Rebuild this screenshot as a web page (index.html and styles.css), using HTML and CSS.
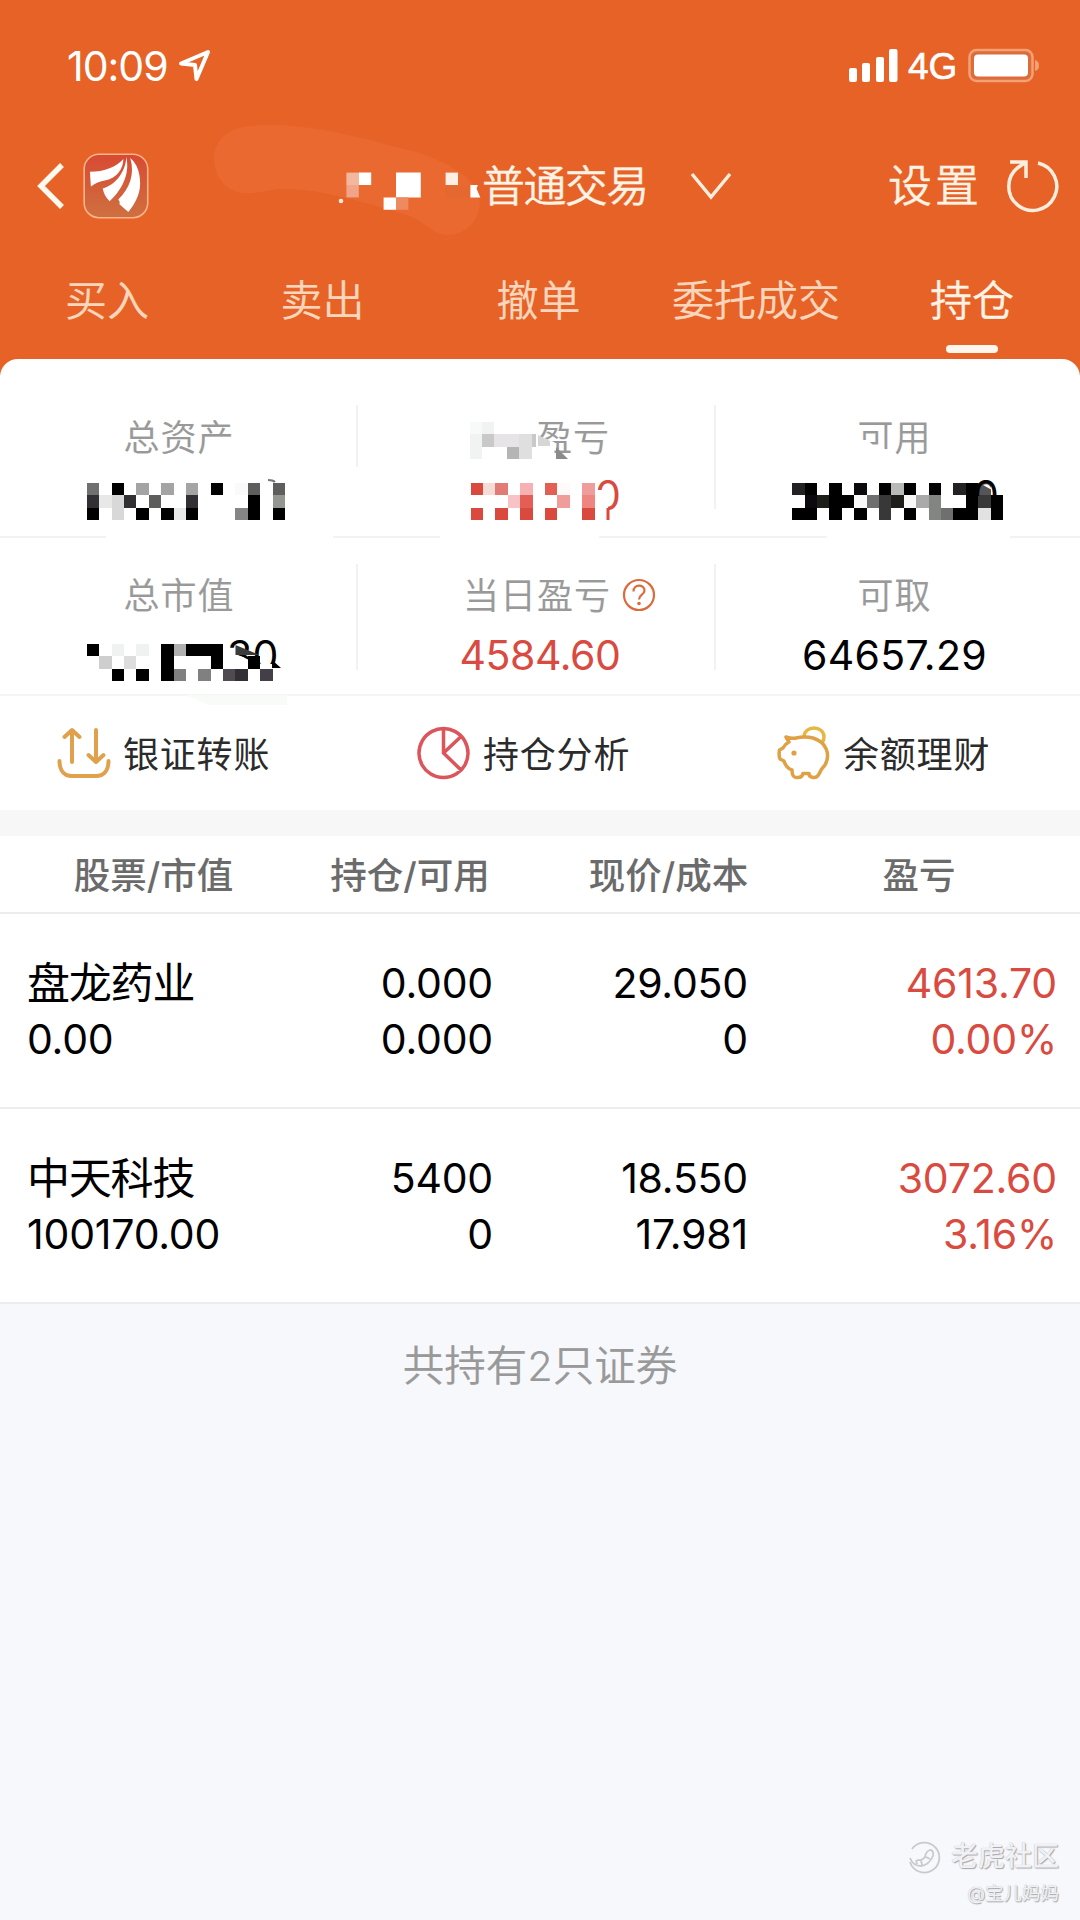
FILE: index.html
```html
<!DOCTYPE html>
<html lang="zh-CN">
<head>
    <meta charset="UTF-8">
    <title>持仓</title>
    <link rel="stylesheet" href="styles.css">
</head>
<body>
<div class="page">
    <header class="header">
        <svg class="smear" width="290" height="130" viewBox="200 115 290 130">
            <path fill="#e96930" d="M214 160C214 138 230 128 250 126C300 121 360 137 400 148C440 157 478 176 480 202C479 224 463 235 448 235C435 235 425 223 410 216C370 204 320 188 282 189C268 190 256 194 243 193C226 191 215 178 214 160Z"/>
        </svg>
        <!--状态栏-->
        <div class="status">
            <span class="time">10:09</span>
            <svg class="location" width="34" height="34" viewBox="0 0 34 34">
                <path d="M3 14.5L30 3L18.500 30L17 16Z"/>
            </svg>
            <div class="status-right">
                <svg width="50" height="36" viewBox="0 0 50 36" fill="#fff">
                    <rect x="1" y="20" width="8" height="14" rx="2"/>
                    <rect x="14" y="15" width="8" height="19" rx="2"/>
                    <rect x="28" y="9" width="8" height="25" rx="2"/>
                    <rect x="41" y="1" width="8.500" height="33" rx="2"/>
                </svg>
                <span class="net">4G</span>
                <svg width="72" height="36" viewBox="0 0 72 36">
                    <rect x="1.500" y="2" width="63" height="31" rx="7" fill="#dc6c3c" stroke="#f3a172" stroke-width="2.500"/>
                    <rect x="6" y="6.500" width="54" height="22" rx="4" fill="#fff"/>
                    <path d="M67 12q4 1 4 5.500t-4 5.500z" fill="#f3a172"/>
                </svg>
            </div>
        </div>
        <!--导航栏-->
        <div class="nav">
            <svg class="back" width="30" height="50" viewBox="0 0 30 50">
                <path d="M26 4L5 25L26 46"/>
            </svg>
            <svg class="logo" width="66" height="66" viewBox="0 0 67 67">
                <defs>
                    <linearGradient id="logoBg" x1="0" y1="0" x2="0" y2="1">
                        <stop offset="0" stop-color="#d84a33"/>
                        <stop offset="1" stop-color="#cf7040"/>
                    </linearGradient>
                </defs>
                <rect x="1.200" y="1.200" width="64.500" height="64.500" rx="15" fill="url(#logoBg)" stroke="#fbb48b" stroke-width="1.600"/>
                <g fill="#fff">
                    <path d="M7 19C22 19 34 14 41 6C41 16 34 26 22 28C16 29 12 31 8 34Z"/>
                    <path d="M44 4C47 18 43 34 27 49C23 45 21 41 20 36C33 32 43 20 44 4Z"/>
                    <path d="M48 5C55 11 58 20 58 31C58 42 53 51 46 60L37 52C38 48 36 49 36 47C47 36 53 22 48 5Z"/>
                </g>
            </svg>
            <div class="title">
                <svg width="146" height="60" viewBox="336 156 146 60">
                    <circle cx="341" cy="201" r="2.300" fill="#ffe9dc"/>
                    <g transform="translate(346.4 172.600) scale(12.400)">
                        <path fill="#f3b7a0" d="M0 0h1v1h-1z"/>
                        <path fill="#f0a488" d="M0 1h1v1h-1z"/>
                        <path fill="#fff" d="M1 0h1v1h-1zM4 0h2v2h-2zM3 2h1v1h-1z"/>
                        <path fill="#ee8a5f" d="M4 2h1v1h-1z"/>
                        <path fill="#fdeee6" d="M8 0h1v1h-1z"/>
                        <path fill="#e4682f" d="M8 1h2v1h-2z"/>
                        <path fill="#fff" d="M10 1h.6l-.1.300l.3.700h-.8z"/>
                    </g>
                </svg>
                <span class="title-text">普通交易</span>
                <svg class="chevron" width="44" height="32" viewBox="0 0 44 32">
                    <path d="M3 4L22 27L41 4"/>
                </svg>
            </div>
            <span class="setting">设置</span>
            <svg class="refresh" width="56" height="56" viewBox="0 0 56 56">
                <path d="M33 5A24 24 0 1 1 13 9.500L21 4M5 4H21V20"/>
            </svg>
        </div>
        <nav class="tabs">
            <a class="tab">买入</a>
            <a class="tab">卖出</a>
            <a class="tab">撤单</a>
            <a class="tab">委托成交</a>
            <a class="tab active">持仓</a>
        </nav>
    </header>

    <main class="card">
        <!--资产-->
        <section class="assets">
            <div class="cell short">
                <span class="label">总资产</span>
                <svg class="value" width="358" height="60" viewBox="0 467 358 60">
                    <path d="M268 480q5 0 7 2" fill="none" stroke="#777" stroke-width="2"/>
                    <g transform="translate(86.700 483) scale(12.400)" shape-rendering="crispEdges">
                        <path fill="#707070" d="M0 0h1v1h-1z"/>
                        <path fill="#000" d="M2 0h1v1h-1zM10 0h1v1h-1zM13 1h1v2h-1zM0 2h1v1h-1zM4 2h1v1h-1zM6 2h1v1h-1zM8 2h1v1h-1zM15 2h1v1h-1z"/>
                        <path fill="#a4a4a4" d="M4 0h1v1h-1zM6 0h1v1h-1zM8 0h1v1h-1z"/>
                        <path fill="#fafafa" d="M12 0h1v1h-1z"/>
                        <path fill="#5e5f5d" d="M13 0h1v1h-1zM15 0h1v1h-1zM5 1h1v1h-1z"/>
                        <path fill="#323035" d="M0 1h1v1h-1zM3 1h1v1h-1zM8 1h1v1h-1z"/>
                        <path fill="#e8e8e8" d="M1 1h1v1h-1zM7 2h1v1h-1z"/>
                        <path fill="#d8d8d8" d="M2 1h1v2h-1z"/>
                        <path fill="#949692" d="M15 1h1v1h-1z"/>
                        <path fill="#858585" d="M12 2h1v1h-1z"/>
                    </g>
                </svg>
            </div>
            <div class="cell">
                <span class="label masked">
                    <svg width="72" height="50" viewBox="465 411 72 50">
                        <g transform="translate(470.500 421) scale(12.400)" shape-rendering="crispEdges">
                            <path fill="#f8faf9" d="M0 0h1v1h-1z"/>
                            <path fill="#f0f3f1" d="M1 0h1v1h-1zM0 1h1v2h-1z"/>
                            <path fill="#c9c9c9" d="M1 1h1v1h-1zM5 1h1v1h-1z"/>
                            <path fill="#e6e4e7" d="M2 1h2v1h-2z"/>
                            <path fill="#dfdfdf" d="M4 1h1v2h-1z"/>
                            <path fill="#b5b5b5" d="M3 2h1v1h-1z"/>
                        </g>
                    </svg>
                    <span class="torn">盈</span><span>亏</span>
                    <svg class="shard" width="32" height="26" viewBox="539 434 32 26">
                        <path fill="#d6d6d6" d="M539 434l12 6v5h-12z"/>
                        <path fill="#8b8b8b" d="M557 446l12 12h-12z"/>
                    </svg>
                </span>
                <svg class="value" width="358" height="60" viewBox="358 467 358 60">
                    <defs>
                        <clipPath id="cutRed"><path d="M598 476h26v36h-16v-12h-4v-10h-6z"/></clipPath>
                    </defs>
                    <text class="num red" x="595" y="510" clip-path="url(#cutRed)">0</text>
                    <path d="M608 508v12" stroke="#dd463d" stroke-width="3"/>
                    <g transform="translate(470.500 483) scale(12.400)" shape-rendering="crispEdges">
                        <path fill="#da493e" d="M0 0h1v1h-1zM0 2h1v1h-1zM2 2h1v1h-1zM4 2h1v1h-1zM6 2h1v1h-1zM9 2h1v1h-1z"/>
                        <path fill="#f6dcd6" d="M1 0h1v1h-1z"/>
                        <path fill="#e27a76" d="M2 0h1v1h-1z"/>
                        <path fill="#f8b1b3" d="M4 0h1v1h-1z"/>
                        <path fill="#e35f56" d="M6 0h1v1h-1zM4 1h1v1h-1z"/>
                        <path fill="#fffafa" d="M7 0h1v1h-1z"/>
                        <path fill="#f09c9a" d="M9 0h1v1h-1zM7 1h1v1h-1z"/>
                        <path fill="#f8c2c6" d="M3 1h1v1h-1z"/>
                        <path fill="#ee8580" d="M9 1h1v1h-1z"/>
                    </g>
                </svg>
            </div>
            <div class="cell last">
                <span class="label masked"><span class="chipped">可</span><span>用</span></span>
                <svg class="value" width="357" height="60" viewBox="716 467 357 60">
                    <defs>
                        <clipPath id="cutTop"><path d="M976 474h30v22h-30z"/></clipPath>
                    </defs>
                    <g transform="translate(792.300 483) scale(12.400)" shape-rendering="crispEdges">
                        <path fill="#000" d="M1 0h1v1h-1zM3 0h1v3h-1zM7 0h1v1h-1zM9 0h1v1h-1zM11 0h1v1h-1zM14 0h1v3h-1zM4 1h1v1h-1zM16 1h1v2h-1zM0 2h2v1h-2zM5 2h1v1h-1zM9 2h1v1h-1zM13 2h1v1h-1z"/>
                        <path fill="#232124" d="M0 0h1v1h-1zM13 0h1v1h-1z"/>
                        <path fill="#0b090d" d="M5 0h1v1h-1zM1 1h1v1h-1z"/>
                        <path fill="#b7bab5" d="M8 0h1v1h-1z"/>
                        <path fill="#555" d="M15 0h1v1h-1z"/>
                        <path fill="#1d1e1a" d="M2 1h1v1h-1zM8 1h1v1h-1z"/>
                        <path fill="#f8f8f8" d="M5 1h1v1h-1zM9 1h1v1h-1z"/>
                        <path fill="#6f6f6f" d="M6 1h1v1h-1zM12 2h1v1h-1z"/>
                        <path fill="#383838" d="M7 1h1v2h-1zM15 1h1v1h-1z"/>
                        <path fill="#aaa" d="M10 1h1v1h-1z"/>
                        <path fill="#838582" d="M11 1h1v2h-1z"/>
                        <path fill="#e2e2e2" d="M15 2h1v1h-1z"/>
                    </g>
                    <path fill="#fff" d="M983 485q6-3 9 5z"/>
                    <text class="num" x="973" y="510" clip-path="url(#cutTop)">0</text>
                </svg>
            </div>
            <!--横线有几段被涂掉-->
            <div class="lines">
                <i class="line-a"></i><i class="line-b"></i><i class="line-c"></i><i class="line-d"></i>
            </div>
            <div class="cell low">
                <span class="label">总市值</span>
                <svg class="value" width="358" height="80" viewBox="0 625 358 80">
                    <defs>
                        <clipPath id="cutArc"><path d="M228 634h52v30h-22l-20-9h-10z"/></clipPath>
                    </defs>
                    <path fill="#f9fbf8" d="M185 695h102v10h-78z"/>
                    <text class="num" x="227" y="670" clip-path="url(#cutArc)">30</text>
                    <path fill="#000" d="M272 660l9 8h-9z"/>
                    <path fill="#3b3b3b" d="M235.500 645l24 10h-24z"/>
                    <g transform="translate(86.700 644) scale(12.400)" shape-rendering="crispEdges">
                        <path fill="#000" d="M0 0h1v1h-1zM6 0h1v3h-1zM8 0h3v1h-3zM10 1h1v1h-1zM13 1h1v1h-1zM2 2h1v1h-1zM4 2h1v1h-1z"/>
                        <path fill="#f0f2f1" d="M2 0h1v1h-1zM4 0h1v1h-1z"/>
                        <path fill="#b0b0b0" d="M7 0h1v1h-1z"/>
                        <path fill="#cecece" d="M1 1h1v1h-1z"/>
                        <path fill="#ddd" d="M3 1h1v1h-1z"/>
                        <path fill="#808080" d="M7 2h1v1h-1zM9 2h1v1h-1z"/>
                        <path fill="#4f4b50" d="M11 2h1v1h-1z"/>
                        <path fill="#333035" d="M12 2h1v1h-1z"/>
                        <path fill="#443f46" d="M14 2h1v1h-1z"/>
                    </g>
                </svg>
            </div>
            <div class="cell low">
                <span class="label">当日盈亏
                    <svg class="help" width="34" height="34" viewBox="0 0 34 34">
                        <circle cx="17" cy="17" r="15"/>
                        <path d="M11.500 13.500C11.500 5.500 22.500 6 22.500 12.500C22.500 17 17 16.500 17 21.500"/>
                        <circle class="dot" cx="17" cy="25.500" r="1.800"/>
                    </svg>
                </span>
                <span class="value num red day">4584.60</span>
            </div>
            <div class="cell low last">
                <span class="label">可取</span>
                <span class="value num">64657.29</span>
            </div>
        </section>

        <!--快捷入口-->
        <section class="actions">
            <a class="action">
                <svg width="54" height="56" viewBox="0 0 54 56" fill="none" stroke="#e0a14c" stroke-width="4" stroke-linecap="round" stroke-linejoin="round">
                    <path d="M15 36V4M7.500 11L15 4L22.500 11M39 4V36M31.500 29L39 36L46.500 29M2.500 35C2.500 44 7 50 15 50H39C47 50 51.500 44 51.500 35"/>
                </svg>
                <span>银证转账</span>
            </a>
            <a class="action">
                <svg width="54" height="56" viewBox="0 0 54 56" fill="none" stroke="#dc555a" stroke-width="3.500">
                    <path d="M26.500 2.500A24.500 24.500 0 1 1 26.490 2.500ZM26.500 3V27L44 44M26.500 27L43.500 11"/>
                </svg>
                <span>持仓分析</span>
            </a>
            <a class="action">
                <svg width="54" height="56" viewBox="0 0 54 56" fill="none" stroke-width="3.500" stroke-linejoin="round">
                    <path stroke="#e6b743" d="M27 11C27 -1 47 -1 47 11Q47 14 45 17"/>
                    <path stroke="#e0a045" d="M9 11Q15 13 19 12Q28 10 36 12C49 16 54 28 48 39Q44 43 42 48Q40 52 36 51.500Q32 51 32 47.500H26Q25 52 20 51.500Q15 52 15 44Q9 42 7 35L3 33Q1.500 30 2.500 24L6 22Q8 18 12 16Z"/>
                    <circle cx="17" cy="27" r="2.600" fill="#e0a045"/>
                </svg>
                <span>余额理财</span>
            </a>
        </section>
        <div class="band"></div>

        <!--持仓列表-->
        <section class="holdings">
            <div class="row head">
                <span>股票/市值</span>
                <span>持仓/可用</span>
                <span>现价/成本</span>
                <span>盈亏</span>
            </div>
            <div class="row">
                <div class="col"><span class="name">盘龙药业</span><span>0.00</span></div>
                <div class="col"><span>0.000</span><span>0.000</span></div>
                <div class="col"><span>29.050</span><span>0</span></div>
                <div class="col red"><span>4613.70</span><span>0.00%</span></div>
            </div>
            <div class="row">
                <div class="col"><span class="name">中天科技</span><span>100170.00</span></div>
                <div class="col"><span>5400</span><span>0</span></div>
                <div class="col"><span>18.550</span><span>17.981</span></div>
                <div class="col red"><span>3072.60</span><span>3.16%</span></div>
            </div>
        </section>
    </main>

    <p class="total">共持有2只证券</p>

    <footer class="mark">
        <div class="mark-name">
            <svg width="34" height="34" viewBox="0 0 34 34" fill="none" stroke="#c9cace" stroke-width="1.800">
                <path d="M5 9A15 15 0 1 1 3 22"/>
                <path d="M3 18q3 8 11 8q8-1 12-10q1-6-3-6q-4 1-5 7q-3 4-8 3M9 20l1 4M14 20l1 5M19 17l4 2"/>
            </svg>
            <span>老虎社区</span>
        </div>
        <div class="mark-user">@宝儿妈妈</div>
    </footer>
</div>
</body>
</html>
```
FILE: styles.css
```css
*{
    box-sizing: border-box;
}
body{
    margin: 0;
    background: #f7f8fc;
    font-family: Inter, "Noto Sans CJK SC", sans-serif;
    color: #000;
}
svg{
    display: block;
    flex: none;
}
.page{
    width: 1080px;
    height: 1920px;
    display: flex;
    flex-direction: column;
    overflow: hidden;
}

/*头部*/
.header{
    position: relative;
    height: 375px;
    margin-bottom: -16px;
    background: #e66226;
    color: #fff3e6;
    font-weight: 350;
}
.smear{
    position: absolute;
    left: 200px;
    top: 115px;
}
.status{
    display: flex;
    align-items: center;
    height: 132px;
    padding: 0 40px 0 67px;
}
.time{
    width: 111px;
    font-size: 41px;
    font-weight: 400;
    letter-spacing: -1px;
    color: #fff;
}
.location path{
    fill: none;
    stroke: #fff;
    stroke-width: 4;
    stroke-linejoin: round;
}
.status-right{
    display: flex;
    align-items: center;
    margin-left: auto;
}
.net{
    width: 70px;
    padding: 2px 0 0 10px;
    font: 400 37px "Liberation Sans", sans-serif;
    color: #fff;
    -webkit-text-stroke: .6px #fff;
}
.nav{
    position: relative;
    display: flex;
    align-items: center;
    height: 108px;
    padding-left: 36px;
}
.back{
    margin-right: 17px;
}
.back path{
    fill: none;
    stroke: #fff8ee;
    stroke-width: 5.500;
}
.title{
    display: flex;
    align-items: center;
    width: 552px;
    margin-left: 187px;
}
.title-text{
    padding-bottom: 7px;
    font-size: 43px;
    letter-spacing: -1.600px;
    -webkit-text-stroke: .3px #fff3e6;
}
.chevron{
    margin-left: 41px;
}
.chevron path,
.refresh path{
    fill: none;
    stroke: #ffeedd;
    stroke-width: 3.500;
}
.setting{
    width: 117px;
    padding-bottom: 6px;
    font-size: 44px;
    letter-spacing: 3px;
    -webkit-text-stroke: .3px #fff3e6;
}
.tabs{
    display: grid;
    grid-template-columns: 214px 217px 215px 220px 212px;
}
.tab{
    display: flex;
    flex-direction: column;
    align-items: center;
    height: 118px;
    font-size: 42px;
    line-height: 122px;
    color: #fbd6bd;
    -webkit-text-stroke: .2px #fbd6bd;
}
.active{
    color: #fff3e6;
    -webkit-text-stroke: .4px #fff3e6;
}
.active::after{
    content: "";
    flex: none;
    width: 52px;
    height: 8px;
    margin-top: -17px;
    border-radius: 4px;
    background: #fff7ee;
}

/*资产卡片*/
.card{
    position: relative;
    background: #fff;
    border-radius: 18px 18px 0 0;
}
.assets{
    display: grid;
    grid-template-columns: 358px 358px 364px;
    grid-template-rows: 177px 2px 156px;
    border-bottom: 2px solid #f5f5f5;
}
.cell{
    display: flex;
    flex-direction: column;
    align-items: center;
    gap: 5px;
    padding-top: 53px;
    background: linear-gradient(#f2f2f2, #f2f2f2) no-repeat right 46px / 2px 104px;
}
.cell.short{
    background-size: 2px 62px;
}
.cell.low{
    padding-top: 32px;
    background-position: right 26px;
    background-size: 2px 106px;
}
.assets .cell.last{
    padding-right: 7px;
    background: none;
}
.label{
    position: relative;
    flex: none;
    height: 50px;
    line-height: 53px;
    font-size: 36px;
    font-weight: 350;
    letter-spacing: 1px;
    color: #999;
    -webkit-text-stroke: .2px #999;
}
.masked{
    display: flex;
}
.torn{
    clip-path: polygon(0 0, 100% 0, 100% 100%, 50% 100%, 50% 60%, 0 48%);
}
.chipped{
    clip-path: polygon(0 0, 100% 0, 100% 76%, 50% 72%, 28% 56%, 0 56%);
}
.shard{
    position: absolute;
    left: 74px;
    top: 23px;
}
.help{
    position: absolute;
    left: 159px;
    top: 8px;
    fill: none;
    stroke: #dc6b3c;
    stroke-width: 2.200;
}
.dot{
    fill: #dc6b3c;
    stroke: none;
}
.value{
    flex: none;
    line-height: 60px;
}
.num,
.col{
    font-size: 41px;
    font-weight: 440;
    letter-spacing: -.2px;
}
.num{
    letter-spacing: .3px;
}
.day{
    padding-left: 6px;
    letter-spacing: -.4px;
}
.red{
    color: #d94a40;
    fill: #d94a40;
}
.lines{
    grid-column: 1 / 4;
    display: grid;
    grid-template-columns: 106px 227px 107px 159px 228px 183px 70px;
}
.lines i{
    background: #f3f3f3;
}
.line-b{
    grid-column: 3;
}
.line-c{
    grid-column: 5;
}
.line-d{
    grid-column: 7;
}

.actions{
    display: grid;
    grid-template-columns: repeat(3, 360px);
    height: 114px;
}
.action{
    display: flex;
    align-items: center;
    gap: 12px;
    padding: 2px 0 0 57px;
    font-size: 36px;
    letter-spacing: .8px;
    color: #2b2b2b;
}
.action span{
    padding-bottom: 5px;
}
.band{
    height: 26px;
    background: #f7f7f7;
}

/*持仓表*/
.row{
    display: grid;
    grid-template-columns: 27px 222px 244px 255px 309px;
    height: 195px;
    padding-top: 41px;
    border-bottom: 2px solid #ececec;
    font-size: 41px;
}
.row.head{
    grid-template-columns: 307px 206px 311px 190px;
    height: 78px;
    padding: 0;
    line-height: 81px;
    font-size: 36.5px;
    font-weight: 500;
    color: #6b6b6b;
    text-align: center;
}
.col{
    display: flex;
    flex-direction: column;
    align-items: flex-end;
    line-height: 56px;
}
.col:first-child{
    grid-column: 2;
    align-items: flex-start;
}
.name{
    font-size: 43px;
    font-weight: 400;
    letter-spacing: -1.200px;
}

.total{
    margin: 32px 0 0;
    line-height: 60px;
    font-size: 41.5px;
    font-weight: 350;
    text-align: center;
    color: #999;
    -webkit-text-stroke: .2px #999;
}

/*水印*/
.mark{
    display: flex;
    flex-direction: column;
    align-items: flex-end;
    margin-top: auto;
    padding: 0 21px 11px 0;
    color: #f0f1f4;
    text-shadow: 1px 1px 1px #a5a6aa, 0 0 1px #b9babe;
}
.mark-name{
    display: flex;
    align-items: center;
    gap: 10px;
    line-height: 40px;
    font-size: 27px;
    font-weight: 500;
}
.mark-user{
    line-height: 32px;
    font-size: 18.5px;
}
```
